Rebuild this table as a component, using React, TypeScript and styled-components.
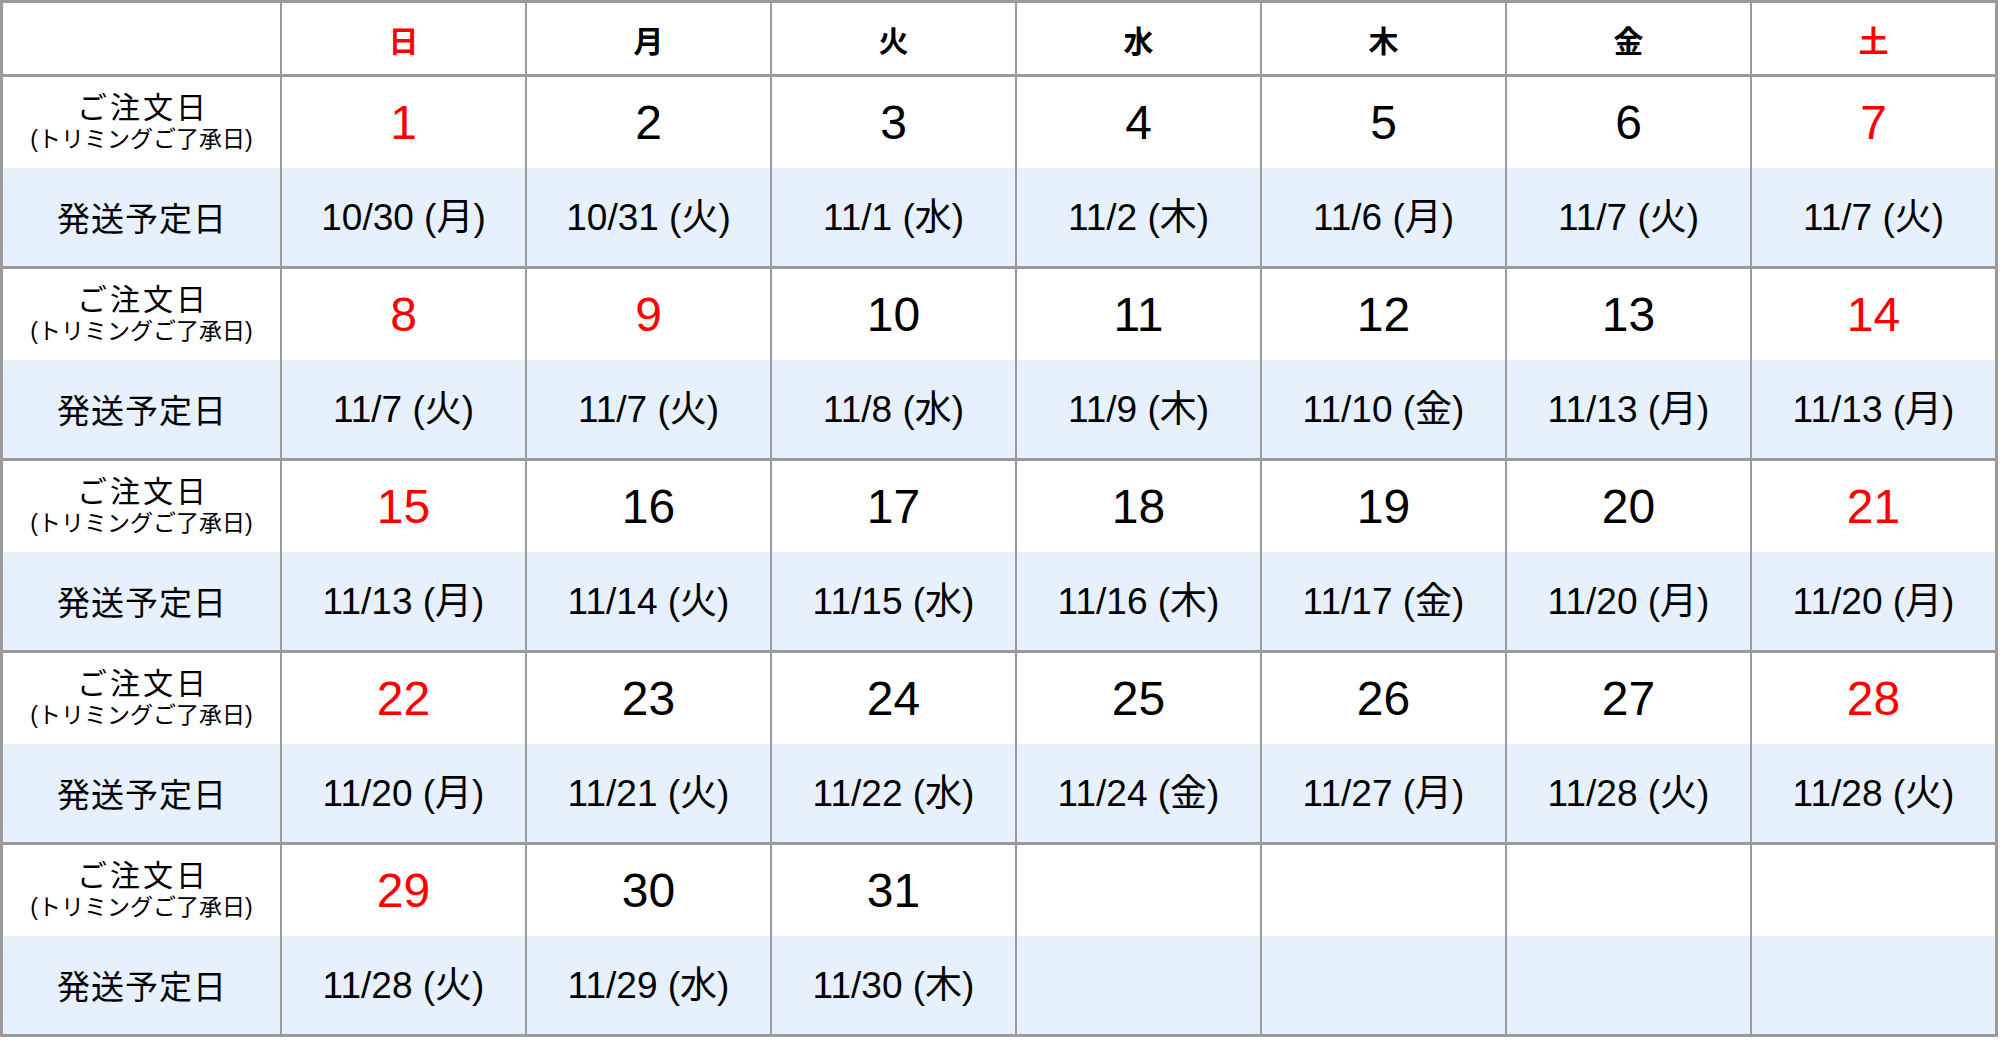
import React from 'react';
import styled, { createGlobalStyle } from 'styled-components';

const GlobalStyle = createGlobalStyle`
    html, body {
        margin: 0;
        padding: 0;
        background: #fff;
    }
`;

const LINE = '#9b9b9b';
const BLUE = '#e7f0fd';
const RED = '#ff0000';
const COLUMNS = '277px repeat(7, 243px)';

// Outer frame, the gray background shows through the gaps as grid lines
const Frame = styled.div`
    display: flex;
    flex-direction: column;
    gap: 3px;
    width: fit-content;
    background: ${LINE};
    border: 3px solid ${LINE};
    font-family: 'Liberation Sans', 'Noto Sans CJK JP', sans-serif;
    color: #000;
`;

const HeaderRow = styled.div`
    display: grid;
    grid-template-columns: ${COLUMNS};
    grid-template-rows: 71px;
    column-gap: 2px;
`;

const Week = styled.div`
    display: grid;
    grid-template-columns: ${COLUMNS};
    grid-template-rows: 91px 98px;
    column-gap: 2px;
`;

const Cell = styled.div<{ $shade?: boolean }>`
    display: flex;
    flex-direction: column;
    align-items: center;
    justify-content: center;
    background: ${(p) => (p.$shade ? BLUE : '#fff')};
    overflow: hidden;
`;

const WeekdayName = styled.span<{ $red?: boolean }>`
    font-family: 'Noto Sans CJK JP', sans-serif;
    font-weight: 700;
    font-size: 30px;
    line-height: 1;
    color: ${(p) => (p.$red ? RED : '#000')};
`;

const OrderLabel = styled.span`
    font-family: 'Noto Sans CJK JP', sans-serif;
    font-size: 30px;
    line-height: 34px;
    letter-spacing: 3px;
    margin-right: -3px;
    margin-top: -4px;
`;

const OrderNote = styled.span`
    font-family: 'Liberation Sans', 'Noto Sans CJK JP', sans-serif;
    font-size: 23px;
    line-height: 28px;
    margin-top: 3px;
`;

const ShipLabel = styled.span`
    font-family: 'Noto Sans CJK JP', sans-serif;
    font-size: 33px;
    letter-spacing: 1px;
    margin-right: -1px;
`;

const DayNumber = styled.span<{ $red?: boolean }>`
    font-size: 48px;
    line-height: 1;
    color: ${(p) => (p.$red ? RED : '#000')};
`;

const ShipDate = styled.span`
    font-size: 37px;
    line-height: 1;
`;

const weekdays = ['日', '月', '火', '水', '木', '金', '土'];

type Day = { n: number; ship: string; red?: boolean };

const weeks: (Day | null)[][] = [
    [
        { n: 1, ship: '10/30 (月)', red: true },
        { n: 2, ship: '10/31 (火)' },
        { n: 3, ship: '11/1 (水)' },
        { n: 4, ship: '11/2 (木)' },
        { n: 5, ship: '11/6 (月)' },
        { n: 6, ship: '11/7 (火)' },
        { n: 7, ship: '11/7 (火)', red: true },
    ],
    [
        { n: 8, ship: '11/7 (火)', red: true },
        { n: 9, ship: '11/7 (火)', red: true },
        { n: 10, ship: '11/8 (水)' },
        { n: 11, ship: '11/9 (木)' },
        { n: 12, ship: '11/10 (金)' },
        { n: 13, ship: '11/13 (月)' },
        { n: 14, ship: '11/13 (月)', red: true },
    ],
    [
        { n: 15, ship: '11/13 (月)', red: true },
        { n: 16, ship: '11/14 (火)' },
        { n: 17, ship: '11/15 (水)' },
        { n: 18, ship: '11/16 (木)' },
        { n: 19, ship: '11/17 (金)' },
        { n: 20, ship: '11/20 (月)' },
        { n: 21, ship: '11/20 (月)', red: true },
    ],
    [
        { n: 22, ship: '11/20 (月)', red: true },
        { n: 23, ship: '11/21 (火)' },
        { n: 24, ship: '11/22 (水)' },
        { n: 25, ship: '11/24 (金)' },
        { n: 26, ship: '11/27 (月)' },
        { n: 27, ship: '11/28 (火)' },
        { n: 28, ship: '11/28 (火)', red: true },
    ],
    [
        { n: 29, ship: '11/28 (火)', red: true },
        { n: 30, ship: '11/29 (水)' },
        { n: 31, ship: '11/30 (木)' },
        null,
        null,
        null,
        null,
    ],
];

const App = () => {
    return (
        <>
            <GlobalStyle />
            <Frame>
                <HeaderRow>
                    <Cell />
                    {weekdays.map((w, i) => (
                        <Cell key={w}>
                            <WeekdayName $red={i === 0 || i === 6}>{w}</WeekdayName>
                        </Cell>
                    ))}
                </HeaderRow>
                {weeks.map((days, wi) => (
                    <Week key={wi}>
                        <Cell>
                            <OrderLabel>ご注文日</OrderLabel>
                            <OrderNote>(トリミングご了承日)</OrderNote>
                        </Cell>
                        {days.map((d, i) => (
                            <Cell key={'o' + i}>
                                {d && <DayNumber $red={d.red}>{d.n}</DayNumber>}
                            </Cell>
                        ))}
                        <Cell $shade>
                            <ShipLabel>発送予定日</ShipLabel>
                        </Cell>
                        {days.map((d, i) => (
                            <Cell key={'s' + i} $shade>
                                {d && <ShipDate>{d.ship}</ShipDate>}
                            </Cell>
                        ))}
                    </Week>
                ))}
            </Frame>
        </>
    );
};

export default App;
